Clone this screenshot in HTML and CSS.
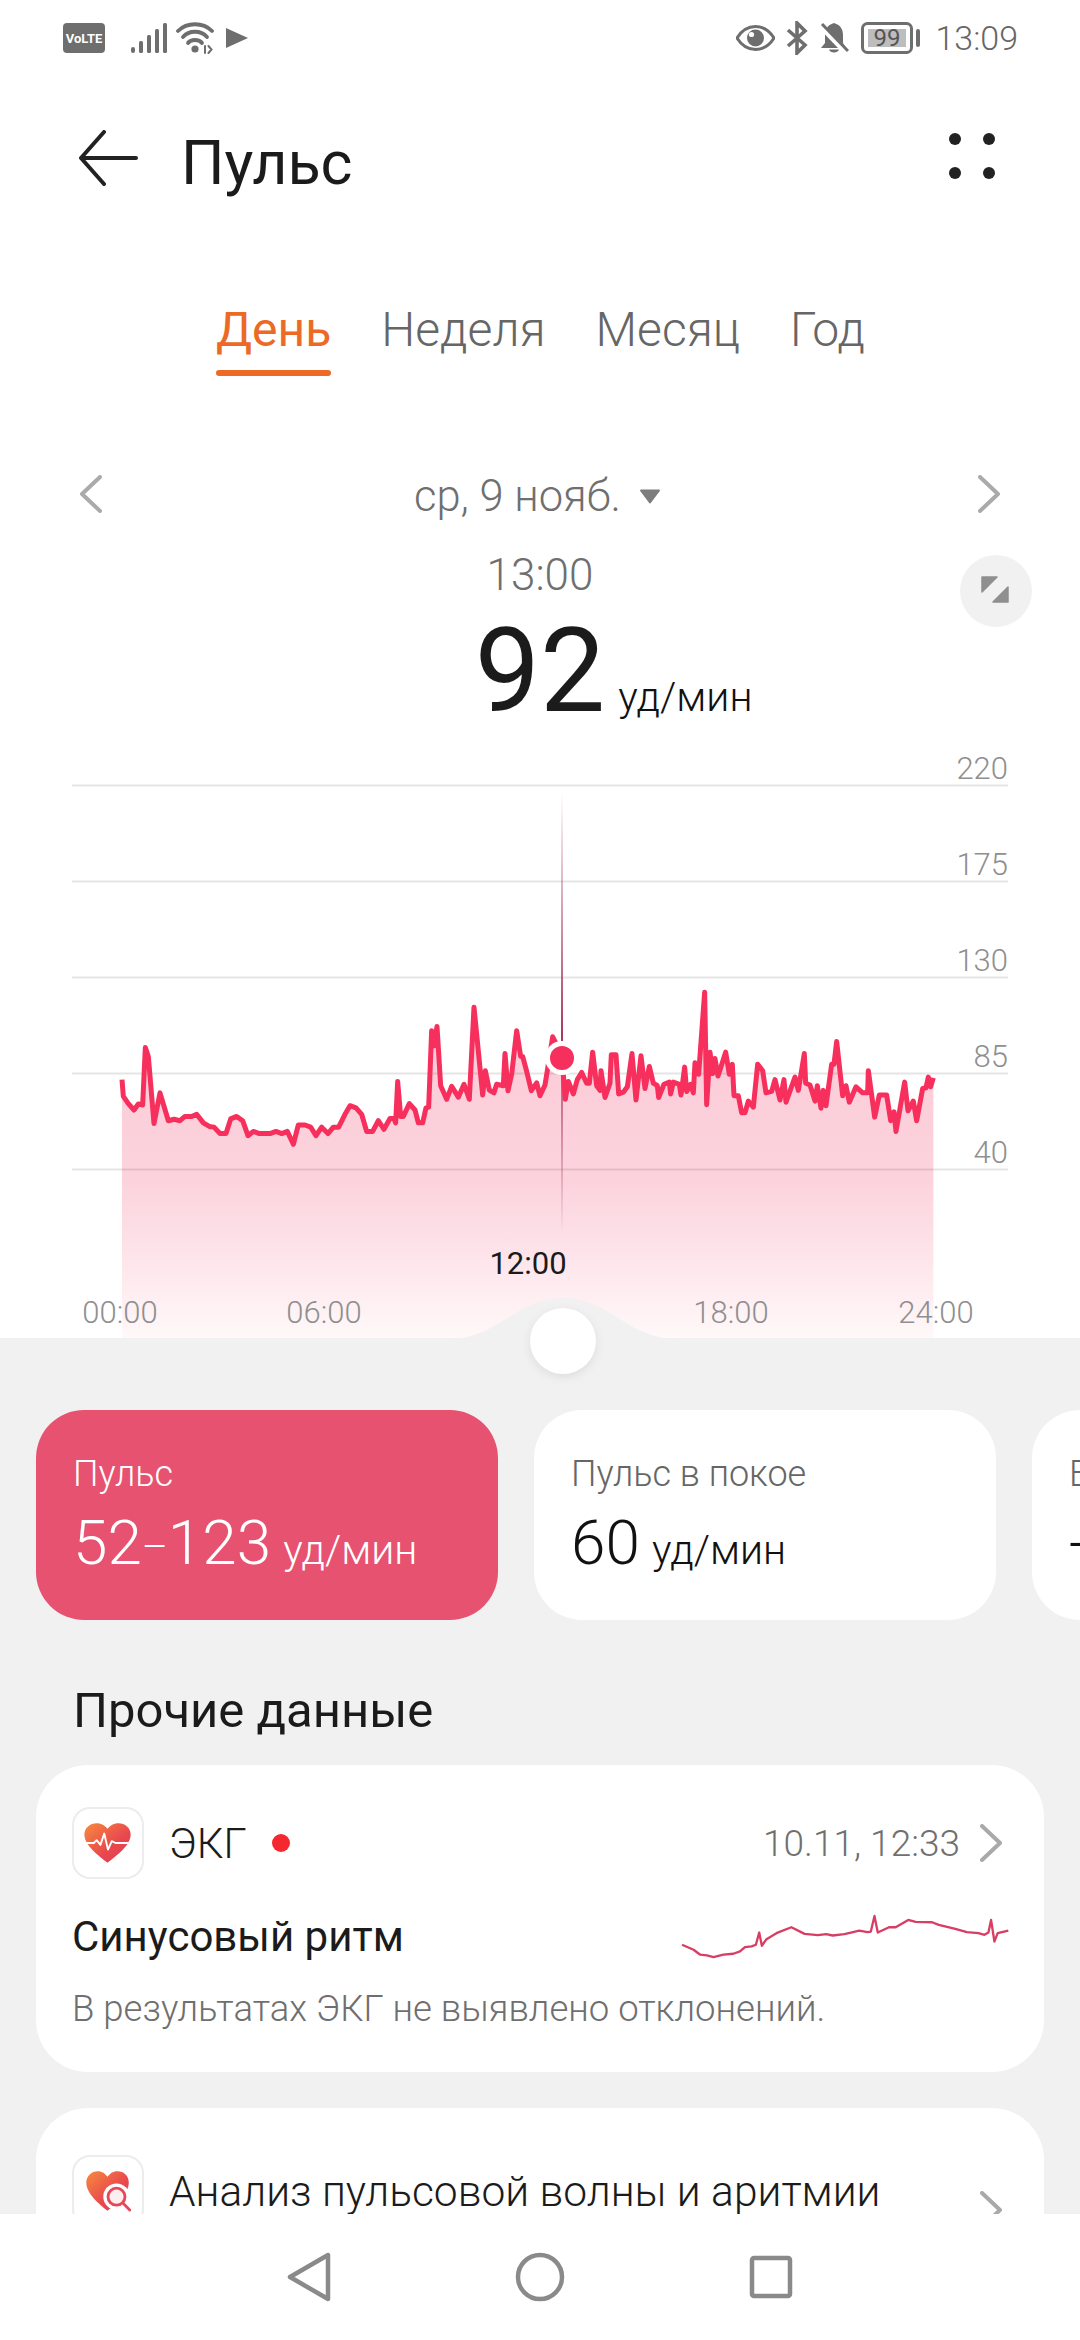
FILE: index.html
```html
<!DOCTYPE html>
<html lang="ru">
  <head>
    <meta charset="utf-8">
    <title>Пульс</title>
    <link rel="stylesheet" href="styles.css">
  </head>
  <body>
    <div class="phone">
      <div class="content">
        <div class="top">
          <!-- status bar -->
          <div class="status">
            <div class="status-left">
              <svg class="volte" width="42" height="30" viewBox="0 0 42 30">
                <rect width="42" height="30" rx="4" fill="#6e6e6e"/>
                <text x="21" y="20" text-anchor="middle" class="volte-text">VoLTE</text>
              </svg>
              <svg class="signal" width="36" height="30" viewBox="0 0 36 30" fill="#6e6e6e">
                <rect x="0" y="24" width="4" height="6" rx="2"/>
                <rect x="8" y="18" width="4" height="12" rx="1.5"/>
                <rect x="16" y="12" width="4" height="18" rx="1.5"/>
                <rect x="24" y="6" width="4" height="24" rx="1.5"/>
                <rect x="32" y="0" width="4" height="30" rx="1.5"/>
              </svg>
              <svg class="wifi" width="38" height="32" viewBox="0 0 38 32" fill="none" stroke="#6e6e6e" stroke-width="3.8" stroke-linecap="round">
                <path d="M2 9C11 0 27 0 36 9"/>
                <path d="M7 15C13 8 25 8 31 15"/>
                <path d="M12 21C15 17 23 17 26 21"/>
                <circle cx="19" cy="27" r="3.6" fill="#6e6e6e" stroke="none"/>
                <path d="M29 31V24M32.500 24l3 3.500-3 3.500" stroke-width="2"/>
              </svg>
              <svg class="play" width="22" height="20" viewBox="0 0 22 20"><path d="M0 0L22 10L0 20Z" fill="#6e6e6e"/></svg>
            </div>
            <div class="status-right">
              <svg width="39" height="26" viewBox="0 0 39 26">
                <path d="M1 13C6 5 12 1.500 19.500 1.500S33 5 38 13C33 21 27 24.500 19.500 24.500S6 21 1 13Z" fill="none" stroke="#6e6e6e" stroke-width="3"/>
                <circle cx="19.500" cy="13" r="8.500" fill="#6e6e6e"/>
                <circle cx="15.500" cy="9.500" r="2.600" fill="#fff"/>
              </svg>
              <svg width="24" height="34" viewBox="0 0 24 34" fill="none" stroke="#6e6e6e" stroke-width="3.600">
                <path d="M3 9L20 24L12 32V2L20 10L3 25"/>
              </svg>
              <svg width="30" height="32" viewBox="0 0 30 32">
                <path d="M15 1C8 3 6 8 6 13V21L2 26H27L24 21V13C24 8 22 3 15 1Z" fill="#6e6e6e"/>
                <path d="M10 27.500H20C19 31.500 11 31.500 10 27.500Z" fill="#6e6e6e"/>
                <path d="M1 3L27 30" stroke="#fff" stroke-width="6"/>
                <path d="M3 2L29 29" stroke="#6e6e6e" stroke-width="3"/>
              </svg>
              <svg class="battery" width="60" height="32" viewBox="0 0 60 32">
                <rect x="1.500" y="1.500" width="49" height="29" rx="5" fill="none" stroke="#6e6e6e" stroke-width="3"/>
                <rect x="7" y="7" width="38" height="18" fill="#bdbdbd"/>
                <text x="26" y="24" text-anchor="middle" class="battery-text">99</text>
                <rect x="55" y="7" width="4" height="18" rx="2" fill="#6e6e6e"/>
              </svg>
              <span class="clock">13:09</span>
            </div>
          </div>

          <!-- title bar -->
          <div class="nav">
            <svg width="60" height="56" viewBox="0 0 60 56" fill="none" stroke="#222" stroke-width="4" stroke-linecap="round" stroke-linejoin="round">
              <path d="M58 28H3M26 2L3 28L26 54"/>
            </svg>
            <h1 class="title">Пульс</h1>
            <div class="more">
              <span class="dot"></span><span class="dot"></span><span class="dot"></span><span class="dot"></span>
            </div>
          </div>

          <div class="tabs">
            <span class="tab active">День</span>
            <span class="tab">Неделя</span>
            <span class="tab">Месяц</span>
            <span class="tab">Год</span>
          </div>

          <div class="date-row">
            <svg width="22" height="38" viewBox="0 0 22 38" fill="none" stroke="#aaa" stroke-width="4" stroke-linecap="round" stroke-linejoin="round"><path d="M20 2L2 19L20 36"/></svg>
            <div class="date">
              <span>ср, 9 нояб.</span>
              <svg width="22" height="15" viewBox="0 0 22 15"><path d="M2 1.500H20L11 13.500Z" fill="#7d7d7d" stroke="#7d7d7d" stroke-width="2" stroke-linejoin="round"/></svg>
            </div>
            <svg width="22" height="38" viewBox="0 0 22 38" fill="none" stroke="#aaa" stroke-width="4" stroke-linecap="round" stroke-linejoin="round"><path d="M2 2L20 19L2 36"/></svg>
          </div>

          <div class="reading">
            <div class="reading-time">13:00</div>
            <div class="reading-value"><span></span><span class="big">92</span><span class="unit">уд/мин</span></div>
            <button class="expand">
              <svg width="30" height="30" viewBox="0 0 30 30" fill="#8f8f8f" stroke="#8f8f8f" stroke-width="1.500" stroke-linejoin="round">
                <path d="M1 1H16L1 16Z"/>
                <path d="M27 11V26H12Z"/>
              </svg>
            </button>
          </div>

          <!-- chart, drawn in page coordinates -->
          <svg class="chart" width="1080" height="568" viewBox="0 770 1080 568">
            <defs>
              <linearGradient id="areaFill" x1="0" y1="0" x2="0" y2="1">
                <stop offset="0" stop-color="#fbc9d6"/>
                <stop offset="0.55" stop-color="#fcd3dd"/>
                <stop offset="1" stop-color="#fff8f9"/>
              </linearGradient>
              <linearGradient id="cursorFill" x1="0" y1="0" x2="0" y2="1">
                <stop offset="0" stop-color="#a8385f" stop-opacity="0"/>
                <stop offset="0.55" stop-color="#a8385f"/>
                <stop offset="0.62" stop-color="#b9587a"/>
                <stop offset="1" stop-color="#b9587a" stop-opacity="0"/>
              </linearGradient>
            </defs>
            <g transform="translate(50 760) scale(0.33333 0.35714)">
              <path fill="url(#areaFill)" d="M216 895L220 942 235 962 252 980 265 963 278 966 286 805 295 830 312 1018 330 932 355 1010 372 1006 390 1010 405 998 425 998 440 992 460 1016 478 1026 492 1028 510 1046 528 1046 542 1005 560 998 578 1010 594 1052 610 1040 628 1046 660 1046 678 1040 695 1046 712 1040 730 1076 745 1022 765 1022 782 1028 798 1052 815 1028 834 1046 850 1028 866 1028 885 992 900 968 918 974 935 992 950 1040 968 1040 985 1010 1002 1034 1020 1004 1032 1004 1037 1016 1043 900 1052 998 1060 998 1078 962 1095 980 1105 1016 1118 1016 1128 974 1136 972 1145 758 1153 800 1161 746 1172 912 1190 950 1205 914 1225 944 1242 908 1258 950 1272 692 1298 938 1306 870 1318 924 1332 932 1340 908 1360 912 1365 822 1374 926 1385 880 1400 758 1412 830 1418 830 1430 872 1444 926 1460 904 1470 940 1485 910 1492 870 1508 775 1516 790 1536 835 1546 950 1555 900 1570 935 1582 895 1595 875 1610 905 1618 905 1628 818 1640 912 1650 925 1653 870 1665 945 1680 905 1684 825 1698 825 1706 935 1720 930 1732 915 1746 822 1758 952 1773 828 1785 920 1798 858 1810 905 1822 912 1826 945 1842 908 1858 902 1862 935 1870 902 1888 908 1893 938 1904 860 1910 928 1922 908 1930 932 1935 848 1946 880 1964 650 1970 965 1980 818 1988 878 1995 836 2004 885 2027 818 2038 880 2047 852 2052 940 2065 940 2075 988 2085 988 2095 955 2110 972 2123 852 2138 870 2148 932 2165 928 2175 895 2190 952 2202 895 2208 958 2235 888 2245 925 2263 822 2267 905 2280 910 2295 955 2302 912 2313 975 2320 925 2328 968 2345 852 2352 852 2360 788 2378 940 2388 912 2398 958 2418 915 2438 932 2453 932 2455 870 2474 1000 2488 938 2510 938 2522 1010 2532 985 2538 1040 2564 902 2574 982 2590 955 2600 1010 2618 920 2628 918 2635 888 2642 915 2650 890V1618H216Z"/>
            </g>

            <g class="grid">
              <path d="M72 785.500H1008M72 881.500H1008M72 977.500H1008M72 1073.500H1008M72 1169.500H1008"/>
            </g>
            <g class="axis-y">
              <text x="1008" y="779">220</text>
              <text x="1008" y="875">175</text>
              <text x="1008" y="971">130</text>
              <text x="1008" y="1067">85</text>
              <text x="1008" y="1163">40</text>
            </g>

            <rect x="561" y="792" width="2" height="443" fill="url(#cursorFill)"/>

            <g transform="translate(50 760) scale(0.33333 0.35714)">
              <path class="pulse-line" d="M216 895L220 942 235 962 252 980 265 963 278 966 286 805 295 830 312 1018 330 932 355 1010 372 1006 390 1010 405 998 425 998 440 992 460 1016 478 1026 492 1028 510 1046 528 1046 542 1005 560 998 578 1010 594 1052 610 1040 628 1046 660 1046 678 1040 695 1046 712 1040 730 1076 745 1022 765 1022 782 1028 798 1052 815 1028 834 1046 850 1028 866 1028 885 992 900 968 918 974 935 992 950 1040 968 1040 985 1010 1002 1034 1020 1004 1032 1004 1037 1016 1043 900 1052 998 1060 998 1078 962 1095 980 1105 1016 1118 1016 1128 974 1136 972 1145 758 1153 800 1161 746 1172 912 1190 950 1205 914 1225 944 1242 908 1258 950 1272 692 1298 938 1306 870 1318 924 1332 932 1340 908 1360 912 1365 822 1374 926 1385 880 1400 758 1412 830 1418 830 1430 872 1444 926 1460 904 1470 940 1485 910 1492 870 1508 775 1516 790 1536 835 1546 950 1555 900 1570 935 1582 895 1595 875 1610 905 1618 905 1628 818 1640 912 1650 925 1653 870 1665 945 1680 905 1684 825 1698 825 1706 935 1720 930 1732 915 1746 822 1758 952 1773 828 1785 920 1798 858 1810 905 1822 912 1826 945 1842 908 1858 902 1862 935 1870 902 1888 908 1893 938 1904 860 1910 928 1922 908 1930 932 1935 848 1946 880 1964 650 1970 965 1980 818 1988 878 1995 836 2004 885 2027 818 2038 880 2047 852 2052 940 2065 940 2075 988 2085 988 2095 955 2110 972 2123 852 2138 870 2148 932 2165 928 2175 895 2190 952 2202 895 2208 958 2235 888 2245 925 2263 822 2267 905 2280 910 2295 955 2302 912 2313 975 2320 925 2328 968 2345 852 2352 852 2360 788 2378 940 2388 912 2398 958 2418 915 2438 932 2453 932 2455 870 2474 1000 2488 938 2510 938 2522 1010 2532 985 2538 1040 2564 902 2574 982 2590 955 2600 1010 2618 920 2628 918 2635 888 2642 915 2650 890"/>
            </g>

            <circle cx="562" cy="1058" r="17" fill="#fff"/>
            <circle cx="562" cy="1058" r="12" fill="#f72f5c"/>

            <g class="axis-x">
              <text x="120" y="1323">00:00</text>
              <text x="324" y="1323">06:00</text>
              <text class="axis-now" x="528" y="1274">12:00</text>
              <text x="731" y="1323">18:00</text>
              <text x="936" y="1323">24:00</text>
            </g>

            <path d="M448 1339C500 1339 515 1298 563 1298C611 1298 626 1339 678 1339Z" fill="#f1f1f1"/>
            <circle class="handle" cx="563" cy="1341" r="33" fill="#fff"/>
          </svg>
        </div>

        <!-- summary cards -->
        <div class="summary">
          <div class="stat stat-active">
            <div class="stat-label">Пульс</div>
            <div class="stat-value">52<span class="stat-dash">–</span>123 <span class="stat-unit">уд/мин</span></div>
          </div>
          <div class="stat">
            <div class="stat-label">Пульс в покое</div>
            <div class="stat-value">60 <span class="stat-unit">уд/мин</span></div>
          </div>
          <div class="stat">
            <div class="stat-label">В</div>
            <div class="stat-value">--</div>
          </div>
        </div>

        <h2 class="section-title">Прочие данные</h2>

        <div class="card">
          <div class="card-head">
            <div class="app-icon">
              <svg width="72" height="72" viewBox="0 0 72 72">
                <defs>
                  <linearGradient id="heartFill" x1="0" y1="0" x2="1" y2="1">
                    <stop offset="0" stop-color="#f78a3d"/>
                    <stop offset="0.6" stop-color="#e8474f"/>
                    <stop offset="1" stop-color="#e23b55"/>
                  </linearGradient>
                </defs>
                <path d="M35.500 57C27 50 11 39 11 27C11 20 17 15 24 15C29 15 33 17.500 35.500 21C38 17.500 42 15 47 15C54 15 60 20 60 27C60 39 44 50 35.500 57Z" fill="url(#heartFill)"/>
                <path d="M11 36H21L24 33L28 38L32 26L36 43L40 34L44 36H60" fill="none" stroke="#fff" stroke-width="2" stroke-linejoin="round"/>
              </svg>
            </div>
            <span class="card-name">ЭКГ</span>
            <span class="red-dot"></span>
            <span class="card-date">10.11, 12:33</span>
            <svg class="chevron" width="22" height="38" viewBox="0 0 22 38" fill="none" stroke="#a9a9a9" stroke-width="4" stroke-linecap="round" stroke-linejoin="round"><path d="M2 2L20 19L2 36"/></svg>
          </div>
          <div class="card-result">
            <span class="result-name">Синусовый ритм</span>
            <svg class="ecg" width="337" height="53" viewBox="40 70 1011 160">
              <path class="ecg-line" d="M55 175L90 190 110 205 130 207 150 212 180 205 210 202 230 195 245 182 265 180 278 175 288 138 296 178 310 158 340 140 385 122 425 142 465 146 490 143 510 147 545 143 565 138 590 132 615 137 625 135 636 88 646 138 680 122 700 122 738 100 760 106 810 107 830 115 880 127 915 137 950 140 968 145 980 138 988 100 998 165 1008 140 1040 132"/>
            </svg>
          </div>
          <p class="card-note">В результатах ЭКГ не выявлено отклонений.</p>
        </div>

        <div class="card card-next">
          <div class="card-head">
            <div class="app-icon">
              <svg width="72" height="72" viewBox="0 0 72 72">
                <path d="M35.500 57C27 50 13 39 13 27C13 20 19 15 25 15C30 15 33 17.500 35.500 21C38 17.500 41 15 46 15C53 15 58 20 58 27C58 39 44 50 35.500 57Z" fill="url(#heartFill)"/>
                <circle cx="45" cy="42" r="14" fill="#fff"/>
                <circle cx="45" cy="42" r="9" fill="#fdeef0" stroke="#e8475a" stroke-width="3"/>
                <path d="M52 49L59 56" stroke="#e8475a" stroke-width="3" stroke-linecap="round"/>
              </svg>
            </div>
            <span class="card-name card-name-long">Анализ пульсовой волны и аритмии</span>
            <svg class="chevron chevron-low" width="22" height="38" viewBox="0 0 22 38" fill="none" stroke="#a9a9a9" stroke-width="4" stroke-linecap="round" stroke-linejoin="round"><path d="M2 2L20 19L2 36"/></svg>
          </div>
        </div>
      </div>

      <!-- system navigation -->
      <div class="sysnav">
        <svg width="44" height="50" viewBox="0 0 44 50" fill="none" stroke="#8a8a8a" stroke-width="4.500" stroke-linejoin="round"><path d="M41 3V47L3 25Z"/></svg>
        <svg width="50" height="50" viewBox="0 0 50 50" fill="none" stroke="#8a8a8a" stroke-width="4.500"><circle cx="25" cy="25" r="22"/></svg>
        <svg width="44" height="44" viewBox="0 0 44 44" fill="none" stroke="#8a8a8a" stroke-width="4.500" stroke-linejoin="round"><rect x="3" y="3" width="38" height="38" rx="2"/></svg>
      </div>
    </div>
  </body>
</html>
```

FILE: styles.css
```css
* {
  box-sizing: border-box;
}

body {
  margin: 0;
  background-color: #f1f1f1;
  font-family: Roboto, "Noto Sans", sans-serif;
  color: #1b1b1b;
}

.phone {
  width: 1080px;
  height: 2340px;
  display: flex;
  flex-direction: column;
  overflow: hidden;
}

.content {
  flex: 1;
  min-height: 0;
  overflow: hidden;
}

.top {
  height: 1338px;
  background-color: #fff;
}

/* status bar */
.status {
  height: 76px;
  padding: 0 62px 0 63px;
  display: flex;
  justify-content: space-between;
  align-items: center;
}

.status-left,
.status-right {
  display: flex;
  align-items: center;
}

.volte {
  margin-right: 26px;
}

.volte-text {
  font-size: 13px;
  font-weight: 700;
  fill: #fff;
}

.signal {
  margin-right: 9px;
}

.wifi {
  margin-right: 12px;
}

.status-right {
  gap: 10px;
}

.battery {
  margin-left: 2px;
}

.battery-text {
  font-size: 24px;
  fill: #555;
}

.clock {
  margin-left: 4px;
  font-size: 34px;
  font-weight: 300;
  color: #666;
}

/* title bar */
.nav {
  height: 164px;
  padding: 0 85px 0 78px;
  display: flex;
  align-items: center;
}

.title {
  margin: 0 0 0 43px;
  padding-top: 10px;
  flex: 1;
  font-size: 61px;
  font-weight: 400;
  color: #1b1b1b;
}

.more {
  width: 46px;
  display: grid;
  grid-template-columns: 12px 12px;
  justify-content: space-between;
  row-gap: 22px;
  margin-top: -4px;
}

.dot {
  width: 12px;
  height: 12px;
  border-radius: 50%;
  background-color: #222;
}

/* tabs */
.tabs {
  margin-top: 60px;
  padding-left: 216px;
  display: flex;
  gap: 50px;
}

.tab {
  font-size: 48px;
  line-height: 60px;
  font-weight: 300;
  color: #666;
}

.active {
  font-weight: 400;
  color: #ec6a26;
}

.active::after {
  content: "";
  display: block;
  height: 6px;
  margin-top: 10px;
  border-radius: 3px;
  background-color: #ec6a26;
}

/* date */
.date-row {
  margin-top: 90px;
  padding: 0 80px;
  height: 56px;
  display: flex;
  justify-content: space-between;
  align-items: center;
}

.date {
  display: flex;
  align-items: center;
  gap: 18px;
  padding: 5px 5px 0 0;
  font-size: 43.5px;
  font-weight: 300;
  color: #6f6f6f;
}

/* current reading */
.reading {
  position: relative;
  height: 248px;
  padding-top: 28px;
  text-align: center;
}

.reading-time {
  font-size: 44px;
  line-height: 50px;
  font-weight: 300;
  color: #6f6f6f;
}

.reading-value {
  margin-top: 6px;
  line-height: 130px;
  white-space: nowrap;
  display: grid;
  grid-template-columns: 1fr auto 1fr;
  align-items: baseline;
}

.big {
  font-size: 116px;
  color: #1b1b1b;
}

.unit {
  margin-left: 13px;
  text-align: left;
  font-size: 41px;
  font-weight: 300;
  color: #111;
}

.expand {
  position: absolute;
  top: 33px;
  right: 48px;
  width: 72px;
  height: 72px;
  padding: 0;
  border: 0;
  border-radius: 50%;
  background-color: #f1f1f1;
  display: flex;
  align-items: center;
  justify-content: center;
}

/* chart */
.chart {
  display: block;
  overflow: visible;
}

.grid path {
  fill: none;
  stroke: #000;
  stroke-opacity: 0.1;
  stroke-width: 2px;
}

.axis-y text {
  font-size: 31px;
  font-weight: 300;
  text-anchor: end;
  fill: #8f8f8f;
}

.axis-x text {
  font-size: 31px;
  font-weight: 300;
  text-anchor: middle;
  fill: #8f8f8f;
}

.axis-x .axis-now {
  font-weight: 400;
  fill: #1b1b1b;
}

.pulse-line {
  fill: none;
  stroke: #f72f5c;
  stroke-width: 5px;
  stroke-linejoin: round;
  vector-effect: non-scaling-stroke;
}

.handle {
  filter: drop-shadow(0 3px 5px rgba(0, 0, 0, 0.08));
}

/* summary cards */
.summary {
  margin-top: 72px;
  padding-left: 36px;
  display: flex;
  gap: 36px;
}

.stat {
  flex: none;
  width: 462px;
  height: 210px;
  padding: 43px 36px 0 37px;
  border-radius: 48px;
  background-color: #fff;
}

.stat-active {
  background-color: #e75270;
  color: #fff;
}

.stat-label {
  font-size: 36px;
  line-height: 42px;
  font-weight: 300;
  color: #666;
}

.stat-active .stat-label {
  color: #fff;
}

.stat-value {
  margin-top: 12px;
  font-size: 62px;
  line-height: 72px;
  font-weight: 300;
  color: #111;
  white-space: nowrap;
}

.stat-dash {
  font-size: 40px;
  vertical-align: 3px;
}

.stat-active .stat-value,
.stat-active .stat-unit {
  color: #fff;
}

.stat-unit {
  margin-left: -3px;
  font-size: 41px;
  font-weight: 300;
  color: #111;
}

/* other data */
.section-title {
  margin: 63px 0 26px 73px;
  font-size: 49px;
  line-height: 56px;
  font-weight: 400;
  color: #1b1b1b;
}

.card {
  margin: 0 36px;
  height: 307px;
  padding: 42px 42px 0 36px;
  border-radius: 52px;
  background-color: #fff;
}

.card-next {
  margin-top: 36px;
  padding-top: 45px;
  height: 300px;
}

.card-head {
  display: flex;
  align-items: center;
}

.app-icon {
  flex: none;
  width: 72px;
  height: 72px;
  border: 2px solid #ececec;
  border-radius: 18px;
  display: flex;
  align-items: center;
  justify-content: center;
}

.card-name {
  margin-left: 25px;
  font-size: 42px;
  font-weight: 300;
  color: #1b1b1b;
}

.card-name-long {
  font-size: 42.5px;
}

.red-dot {
  width: 18px;
  height: 18px;
  margin-left: 25px;
  border-radius: 50%;
  background-color: #f5282f;
}

.card-date {
  margin-left: auto;
  font-size: 37px;
  font-weight: 300;
  color: #707070;
}

.chevron {
  flex: none;
  margin-left: 20px;
}

.chevron-low {
  margin-left: auto;
  margin-top: 38px;
}

.card-result {
  margin-top: 31px;
  display: flex;
  justify-content: space-between;
  align-items: center;
}

.result-name {
  font-size: 42px;
  font-weight: 400;
  color: #1b1b1b;
}

.ecg {
  margin-right: -11px;
}

.ecg-line {
  fill: none;
  stroke: #d83e63;
  stroke-width: 7px;
  stroke-linejoin: round;
}

.card-note {
  margin: 24px 0 0;
  font-size: 36.5px;
  font-weight: 300;
  color: #6f6f6f;
}

/* system navigation */
.sysnav {
  flex: none;
  height: 126px;
  background-color: #fff;
  display: flex;
  justify-content: center;
  align-items: center;
  gap: 184px;
}
```
